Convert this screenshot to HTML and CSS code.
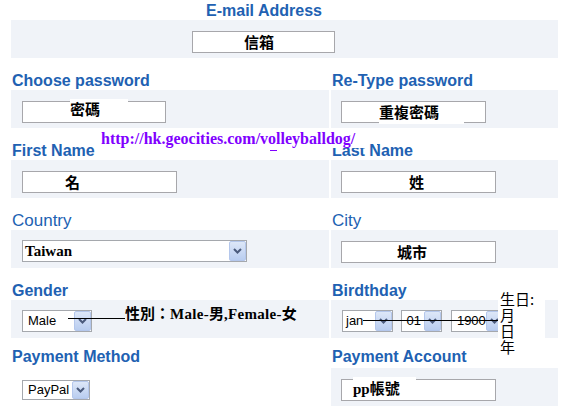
FILE: index.html
```html
<!DOCTYPE html>
<html>
<head>
<meta charset="utf-8">
<title>Register</title>
<link rel="stylesheet" href="styles.css">
</head>
<body>
<div class="page">
  <section class="email">
    <div class="lbl lbl-email">E-mail Address</div>
    <div class="band band-email">
      <div class="field w-email"><span class="ov ov-email">信箱</span></div>
    </div>
  </section>

  <div class="grid">
    <div class="cell left">
      <div class="lbl">Choose password</div>
      <div class="band"><div class="field w-pw"><span class="ov ov-pw">密碼</span></div></div>
    </div>
    <div class="cell right">
      <div class="lbl">Re-Type password</div>
      <div class="band"><div class="field w-rpw"><span class="ov ov-rpw">重複密碼</span></div></div>
    </div>

    <div class="cell left">
      <div class="lbl">First Name</div>
      <div class="band"><div class="field w-name"><span class="ov ov-first">名</span></div></div>
    </div>
    <div class="cell right">
      <div class="lbl">Last Name</div>
      <div class="band"><div class="field w-name"><span class="ov ov-last">姓</span></div></div>
    </div>

    <div class="cell left">
      <div class="lbl thin">Country</div>
      <div class="band band-sel">
        <div class="select w-country"><span class="sel-text serif">Taiwan</span><span class="btn"><svg width="9" height="6" viewBox="0 0 9 6"><path d="M1 1 L4.5 4.5 L8 1" fill="none" stroke="#4b5b7c" stroke-width="2"/></svg></span></div>
      </div>
    </div>
    <div class="cell right">
      <div class="lbl thin">City</div>
      <div class="band"><div class="field w-name"><span class="ov ov-city">城市</span></div></div>
    </div>

    <div class="cell left">
      <div class="lbl">Gender</div>
      <div class="band band-sel">
        <div class="select w-gender"><span class="sel-text">Male</span><span class="btn"><svg width="9" height="6" viewBox="0 0 9 6"><path d="M1 1 L4.5 4.5 L8 1" fill="none" stroke="#4b5b7c" stroke-width="2"/></svg></span></div>
      </div>
    </div>
    <div class="cell right">
      <div class="lbl">Birdthday</div>
      <div class="band band-sel band-bd">
        <div class="select w-month"><span class="sel-text t-month">jan</span><span class="btn"><svg width="9" height="6" viewBox="0 0 9 6"><path d="M1 1 L4.5 4.5 L8 1" fill="none" stroke="#4b5b7c" stroke-width="2"/></svg></span></div>
        <div class="select w-day"><span class="sel-text t-day">01</span><span class="btn"><svg width="9" height="6" viewBox="0 0 9 6"><path d="M1 1 L4.5 4.5 L8 1" fill="none" stroke="#4b5b7c" stroke-width="2"/></svg></span></div>
        <div class="select w-year"><span class="sel-text">1900</span><span class="btn"><svg width="9" height="6" viewBox="0 0 9 6"><path d="M1 1 L4.5 4.5 L8 1" fill="none" stroke="#4b5b7c" stroke-width="2"/></svg></span></div>
      </div>
    </div>

    <div class="cell left last">
      <div class="lbl">Payment Method</div>
      <div class="band band-plain">
        <div class="select w-pay"><span class="sel-text">PayPal</span><span class="btn"><svg width="9" height="6" viewBox="0 0 9 6"><path d="M1 1 L4.5 4.5 L8 1" fill="none" stroke="#4b5b7c" stroke-width="2"/></svg></span></div>
      </div>
    </div>
    <div class="cell right last">
      <div class="lbl">Payment Account</div>
      <div class="band"><div class="field w-name"><span class="ov ov-acct"><span class="serif">pp</span>帳號</span></div></div>
    </div>
  </div>

  <div class="note-url">http://hk.geocities.com/volleyballdog/</div>
  <span class="mark-dash"></span>
  <span class="mark-dot"></span>
  <div class="note-gender">性別：<span class="serif">Male-</span>男<span class="serif">,Female-</span>女</div>
  <span class="line line-gender"></span>
  <span class="line line-bd"></span>
  <div class="note-bd">生日:<br>月<br>日<br>年</div>
</div>
</body>
</html>
```

FILE: styles.css
```css
* { box-sizing: border-box; }

html, body {
  margin: 0;
  padding: 0;
  background: #ffffff;
}

body {
  font-family: "Liberation Sans", Arial, sans-serif;
  color: #000;
}

.page {
  position: relative;
  width: 564px;
  height: 410px;
  padding-left: 11px;
  overflow: hidden;
}

.lbl {
  font-family: "Liberation Sans", Arial, sans-serif;
  font-weight: bold;
  font-size: 16px;
  line-height: 20px;
  color: #2161b2;
  white-space: nowrap;
  height: 32px;
  padding-top: 13px;
  padding-left: 1px;
}

.lbl.thin {
  font-weight: normal;
  font-size: 17px;
}

.lbl-email {
  height: 20px;
  padding-top: 1px;
  margin-left: 181px;
  width: 143px;
  text-align: center;
  display: flex;
  justify-content: center;
}

.band {
  background: #f0f3f8;
  height: 38px;
  padding-top: 11px;
}

.band-email {
  width: 547px;
  padding-left: 181px;
}

.band-sel { padding-top: 10px; }

.band-plain {
  background: transparent;
  padding-top: 12px;
}

.grid {
  display: grid;
  grid-template-columns: 318px 227px;
  column-gap: 2px;
}

.cell.left .band { padding-left: 11px; }
.cell.right .band { padding-left: 10px; }
.cell.last .lbl { height: 30px; padding-top: 9px; }

.field {
  position: relative;
  height: 22px;
  background: #fff;
  border: 1px solid #a7a7ab;
}

.w-email { width: 143px; }
.w-pw { width: 144px; }
.w-rpw { width: 145px; }
.w-name { width: 155px; }

.ov {
  position: absolute;
  font-family: "Noto Sans CJK TC", "Noto Sans CJK SC", sans-serif;
  font-weight: bold;
  font-size: 15px;
  line-height: 19px;
  color: #000;
  white-space: nowrap;
}

.serif {
  font-family: "Liberation Serif", "Times New Roman", serif;
  font-weight: bold;
}

.ov-email { left: 51px; top: 0; }
.ov-pw { left: 47px; top: -3px; width: 58px; height: 20px; background: #fff; line-height: 20px; }
.ov-rpw { left: 37px; top: 0; width: 85px; height: 22px; background: #fff; }
.ov-first { left: 42px; top: 0; }
.ov-last { left: 67px; top: 0; }
.ov-city { left: 55px; top: 0; }
.ov-acct { left: 11px; top: -3px; width: 63px; height: 19px; background: #fff; line-height: 21px; }

.select {
  display: inline-flex;
  align-items: stretch;
  height: 22px;
  background: #fff;
  border: 1px solid #a5a8ad;
  vertical-align: top;
}

.sel-text {
  flex: 1;
  font-family: "Liberation Sans", Arial, sans-serif;
  font-size: 13px;
  line-height: 20px;
  padding-left: 5px;
  white-space: nowrap;
  overflow: hidden;
}

.sel-text.serif {
  font-family: "Liberation Serif", "Times New Roman", serif;
  font-weight: bold;
  font-size: 15px;
  padding-left: 2px;
}

.t-month { padding-left: 3px; }
.t-day { padding-left: 4px; }

.btn {
  width: 17px;
  display: flex;
  align-items: center;
  justify-content: center;
  background: linear-gradient(#dde7f8, #b9cdf0);
  border: 1px solid #b4c7ec;
  border-radius: 2px;
}

.w-country { width: 225px; }
.w-gender { width: 70px; }
.w-month { width: 51px; margin-left: 1px; }
.w-day { width: 41px; margin-left: 4px; }
.w-year { width: 53px; margin-left: 4px; }
.w-pay { width: 68px; height: 20px; }
.w-pay .sel-text { line-height: 18px; }

.note-url {
  position: absolute;
  left: 101px;
  top: 130px;
  width: 265px;
  height: 18px;
  background: #fff;
  font-family: "Liberation Serif", "Times New Roman", serif;
  font-weight: bold;
  font-size: 16px;
  line-height: 17px;
  color: #8000ff;
  white-space: nowrap;
}

.mark-dash {
  position: absolute;
  left: 270px;
  top: 150px;
  width: 7px;
  height: 1px;
  background: #8000ff;
}

.mark-dot {
  position: absolute;
  left: 377px;
  top: 144px;
  width: 2px;
  height: 1px;
  background: #2161b2;
}

.note-gender {
  position: absolute;
  left: 125px;
  top: 304px;
  font-family: "Noto Sans CJK TC", "Noto Sans CJK SC", sans-serif;
  font-weight: bold;
  font-size: 15px;
  line-height: 17px;
  white-space: nowrap;
}

.note-gender .serif { font-size: 15px; letter-spacing: 0.3px; }

.line {
  position: absolute;
  height: 1px;
  background: #000;
}

.line-gender { left: 68px; top: 318px; width: 57px; }
.line-bd { left: 363px; top: 320px; width: 137px; }

.note-bd {
  position: absolute;
  left: 498px;
  top: 291px;
  width: 47px;
  height: 65px;
  background: #fff;
  padding-left: 2px;
  font-family: "Noto Sans CJK TC", "Noto Sans CJK SC", sans-serif;
  font-size: 15px;
  line-height: 16px;
  white-space: nowrap;
}
```
